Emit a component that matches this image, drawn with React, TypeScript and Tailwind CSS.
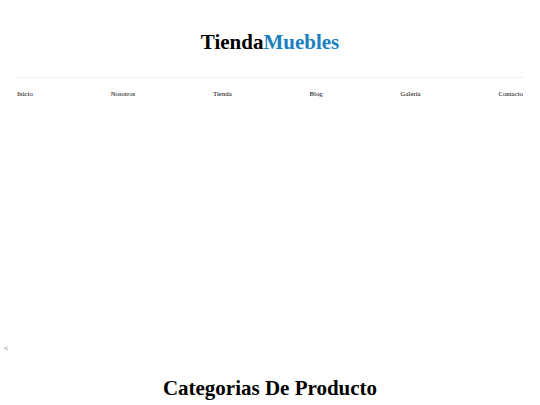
export default function App() {
  const links = ["Inicio", "Nosotros", "Tienda", "Blog", "Galeria", "Contacto"]
  return (
    <div className="bg-white min-h-[405px] font-['Liberation_Serif',serif] text-black">
      <header className="px-4">
        <h1 className="pt-[29px] text-center text-[21px] font-bold leading-[26px]">
          Tienda<span className="text-[#1b80bf]">Muebles</span>
        </h1>
        <div className="mt-[22px] border-t border-[#efefef]" />
        <nav className="mt-[11px] flex justify-between px-[1px] text-[6.8px] leading-[9px]">
          {links.map((l) => (
            <a key={l} href="#">{l}</a>
          ))}
        </nav>
      </header>
      <div className="mt-[246px] pl-[4px] text-[8px] leading-[10px] text-[#555]">&lt;</div>
      <h2 className="mt-[21px] text-center text-[21px] font-bold leading-[26px]">
        Categorias De Producto
      </h2>
    </div>
  )
}
